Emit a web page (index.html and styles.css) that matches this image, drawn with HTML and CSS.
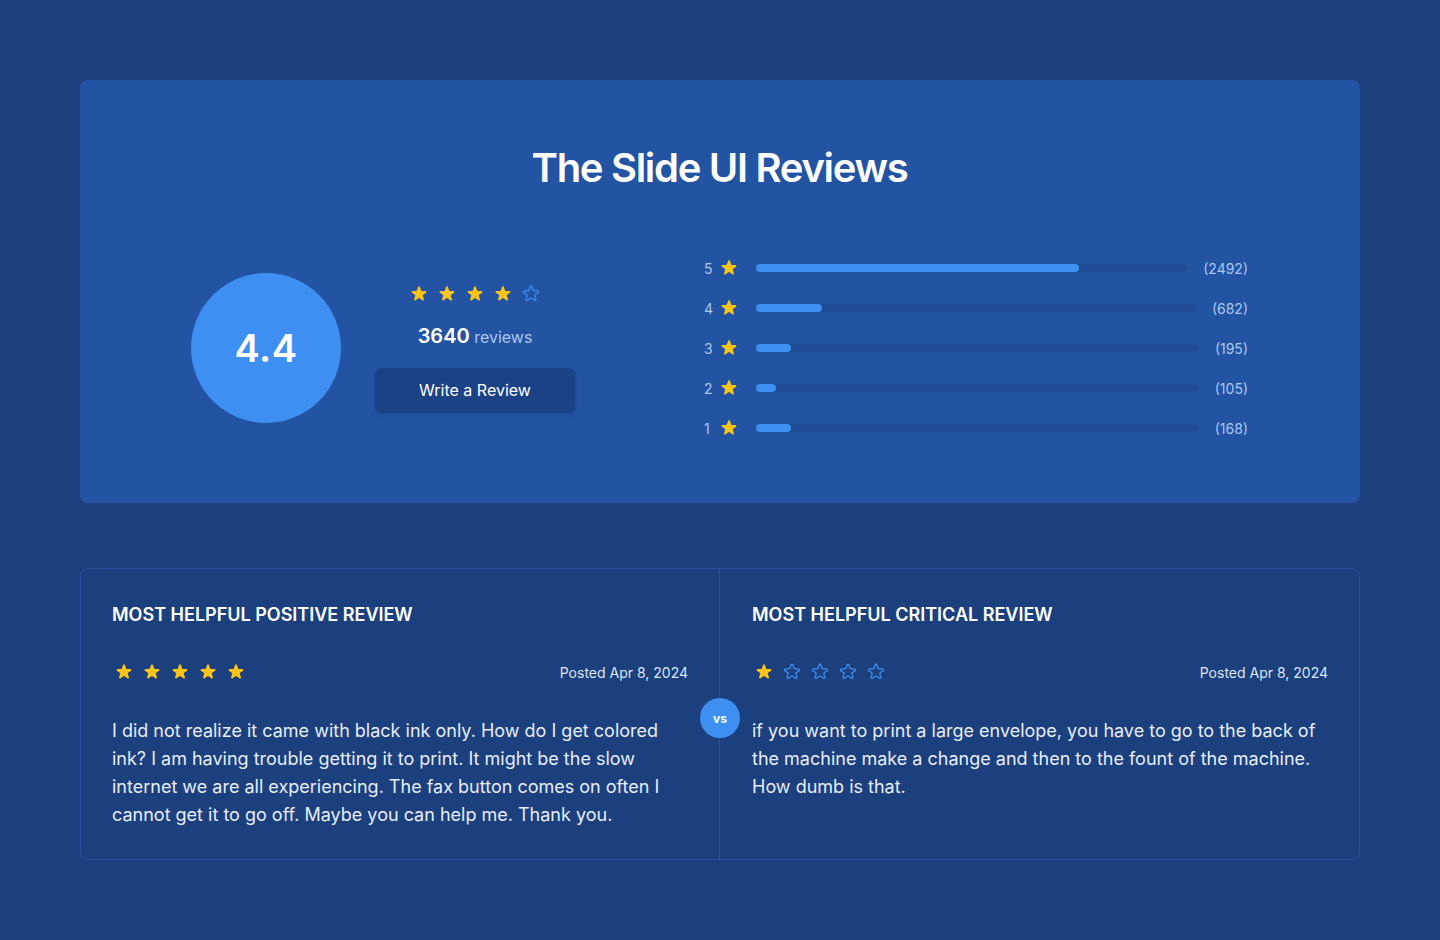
FILE: index.html
```html
<!DOCTYPE html>
<html lang="en">
<head>
    <meta charset="UTF-8">
    <meta name="viewport" content="width=device-width, initial-scale=1.0">
    <title>The Slide UI Reviews</title>
    <link rel="stylesheet" href="styles.css">
</head>
<body>
    <svg style="display:none">
        <symbol id="star" viewBox="0 0 20 20">
            <path d="M9.05 2.93c.3-.92 1.6-.92 1.9 0l1.07 3.3a1 1 0 0 0 .95.69h3.46c.97 0 1.37 1.24.59 1.81l-2.8 2.03a1 1 0 0 0-.36 1.12l1.07 3.3c.3.92-.76 1.68-1.54 1.12l-2.8-2.04a1 1 0 0 0-1.18 0l-2.8 2.04c-.78.56-1.83-.2-1.54-1.12l1.07-3.3a1 1 0 0 0-.36-1.12L2.98 8.73c-.78-.57-.38-1.81.59-1.81h3.46a1 1 0 0 0 .95-.69l1.07-3.3z"/>
        </symbol>
    </svg>

    <main class="page">
        <section class="summary">
            <h1>The Slide UI Reviews</h1>
            <div class="summary-row">
                <div class="overall">
                    <div class="score">4.4</div>
                    <div class="meta">
                        <div class="stars">
                            <svg class="star"><use href="#star"/></svg>
                            <svg class="star"><use href="#star"/></svg>
                            <svg class="star"><use href="#star"/></svg>
                            <svg class="star"><use href="#star"/></svg>
                            <svg class="star empty"><use href="#star"/></svg>
                        </div>
                        <p class="total"><strong>3640</strong> reviews</p>
                        <button class="write-btn">Write a Review</button>
                    </div>
                </div>

                <div class="breakdown">
                    <div class="bar-row">
                        <span class="num">5</span>
                        <svg class="star small"><use href="#star"/></svg>
                        <div class="track"><div class="fill" style="width:75%"></div></div>
                        <span class="count">(2492)</span>
                    </div>
                    <div class="bar-row">
                        <span class="num">4</span>
                        <svg class="star small"><use href="#star"/></svg>
                        <div class="track"><div class="fill" style="width:15%"></div></div>
                        <span class="count">(682)</span>
                    </div>
                    <div class="bar-row">
                        <span class="num">3</span>
                        <svg class="star small"><use href="#star"/></svg>
                        <div class="track"><div class="fill" style="width:8%"></div></div>
                        <span class="count">(195)</span>
                    </div>
                    <div class="bar-row">
                        <span class="num">2</span>
                        <svg class="star small"><use href="#star"/></svg>
                        <div class="track"><div class="fill" style="width:4.5%"></div></div>
                        <span class="count">(105)</span>
                    </div>
                    <div class="bar-row">
                        <span class="num">1</span>
                        <svg class="star small"><use href="#star"/></svg>
                        <div class="track"><div class="fill" style="width:8%"></div></div>
                        <span class="count">(168)</span>
                    </div>
                </div>
            </div>
        </section>

        <section class="compare">
            <article class="review">
                <h2>Most helpful positive review</h2>
                <div class="review-head">
                    <div class="stars">
                        <svg class="star big"><use href="#star"/></svg>
                        <svg class="star big"><use href="#star"/></svg>
                        <svg class="star big"><use href="#star"/></svg>
                        <svg class="star big"><use href="#star"/></svg>
                        <svg class="star big"><use href="#star"/></svg>
                    </div>
                    <span class="date">Posted Apr 8, 2024</span>
                </div>
                <p>I did not realize it came with black ink only. How do I get colored ink? I am having trouble getting it to print. It might be the slow internet we are all experiencing. The fax button comes on often I cannot get it to go off. Maybe you can help me. Thank you.</p>
            </article>
            <article class="review">
                <h2>Most helpful critical review</h2>
                <div class="review-head">
                    <div class="stars">
                        <svg class="star big"><use href="#star"/></svg>
                        <svg class="star big empty"><use href="#star"/></svg>
                        <svg class="star big empty"><use href="#star"/></svg>
                        <svg class="star big empty"><use href="#star"/></svg>
                        <svg class="star big empty"><use href="#star"/></svg>
                    </div>
                    <span class="date">Posted Apr 8, 2024</span>
                </div>
                <p>if you want to print a large envelope, you have to go to the back of the machine make a change and then to the fount of the machine. How dumb is that.</p>
            </article>
            <span class="vs">vs</span>
        </section>
    </main>
</body>
</html>
```

FILE: styles.css
```css
body {
    margin: 0;
    background-color: #1c3f7e;
    font-family: Inter, "Noto Sans", sans-serif;
    color: #ffffff;
}
.page {
    padding: 80px;
}
.summary {
    background-color: #2353a3;
    border-radius: 8px;
    padding: 64px 112px 55px 111px;
}
h1 {
    margin: 0;
    text-align: center;
    font-size: 40px;
    line-height: 48px;
    font-weight: 600;
    letter-spacing: -1.3px;
}
.summary-row {
    margin-top: 56px;
    display: flex;
    justify-content: space-between;
    align-items: center;
}
.overall {
    display: flex;
    align-items: center;
    gap: 34px;
}
.score {
    width: 150px;
    height: 150px;
    border-radius: 50%;
    background-color: #3d8ff1;
    display: flex;
    align-items: center;
    justify-content: center;
    font-size: 38px;
    font-weight: 600;
    letter-spacing: 0.5px;
}
.meta {
    width: 200px;
    display: flex;
    flex-direction: column;
    align-items: center;
}
.stars {
    display: flex;
    gap: 8px;
}
.star {
    width: 20px;
    height: 20px;
    fill: #fcc419;
}
.star.empty {
    fill: none;
    stroke: #3d8ff1;
    stroke-width: 1.3;
}
.total {
    margin: 20px 0 19px;
    font-size: 16px;
    line-height: 24px;
    color: #a9c8f2;
}
.total strong {
    font-size: 20px;
    font-weight: 600;
    color: #ffffff;
}
.write-btn {
    width: 200px;
    height: 45px;
    border: none;
    border-radius: 6px;
    background-color: #1c4286;
    color: #ffffff;
    font-family: inherit;
    font-size: 16px;
    box-shadow: 0 2px 4px rgba(0, 0, 0, 0.12);
    cursor: pointer;
}
.breakdown {
    width: 544px;
}
.bar-row {
    height: 40px;
    display: flex;
    align-items: center;
    font-size: 14px;
    color: #a9c8f2;
}
.num {
    width: 10px;
}
.star.small {
    width: 20px;
    height: 20px;
    margin: 0 17px 0 5px;
}
.track {
    flex: 1;
    height: 8px;
    border-radius: 4px;
    background-color: #1f4a95;
}
.fill {
    height: 100%;
    border-radius: 4px;
    background-color: #3d8ff1;
}
.count {
    margin-left: 16px;
}
.compare {
    position: relative;
    margin-top: 65px;
    display: grid;
    grid-template-columns: 638px 1fr;
    border: 1px solid #2a5299;
    border-radius: 8px;
}
.review {
    padding: 34px 31px 30px;
}
.review + .review {
    border-left: 1px solid #2a5299;
    padding-left: 32px;
}
.review h2 {
    margin: 0;
    font-size: 18px;
    line-height: 24px;
    font-weight: 600;
    text-transform: uppercase;
}
.review-head {
    margin-top: 35px;
    display: flex;
    justify-content: space-between;
    align-items: center;
}
.review-head .stars {
    padding-left: 2px;
}
.date {
    font-size: 14px;
    color: #dbe6f6;
}
.review p {
    margin: 35px 0 0;
    font-size: 18px;
    line-height: 28px;
    color: #e6eefa;
}
.vs {
    position: absolute;
    left: 639px;
    top: 129px;
    transform: translateX(-50%);
    width: 40px;
    height: 40px;
    border-radius: 50%;
    background-color: #3d8ff1;
    display: flex;
    align-items: center;
    justify-content: center;
    font-size: 12px;
    font-weight: 700;
}
```
